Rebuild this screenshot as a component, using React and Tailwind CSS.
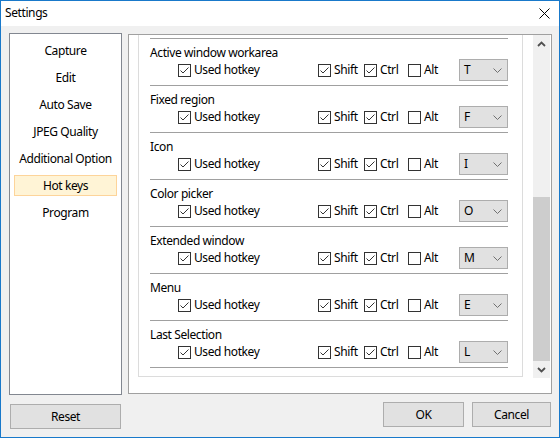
import React from "react";

const menu = ["Capture", "Edit", "Auto Save", "JPEG Quality", "Additional Option", "Hot keys", "Program"];

const hotkeys = [
  { name: "Active window workarea", key: "T" },
  { name: "Fixed region", key: "F" },
  { name: "Icon", key: "I" },
  { name: "Color picker", key: "O" },
  { name: "Extended window", key: "M" },
  { name: "Menu", key: "E" },
  { name: "Last Selection", key: "L" },
];

const Check = ({ checked, label }) => (
  <span className="flex items-center gap-[3px]">
    <span className="w-[13px] h-[13px] border border-[#333333] bg-white flex items-center justify-center shrink-0">
      {checked && (
        <svg width="11" height="11" viewBox="0 0 11 11">
          <path d="M1.5 5.5 L4 8 L9.5 2.5" stroke="#333333" strokeWidth="1" fill="none" />
        </svg>
      )}
    </span>
    <span>{label}</span>
  </span>
);

const Chevron = ({ up }) => (
  <svg width="9" height="6" viewBox="0 0 9 6">
    <path
      d={up ? "M1 5 L4.5 1.5 L8 5" : "M1 1 L4.5 4.5 L8 1"}
      stroke="#505050"
      strokeWidth="1.8"
      fill="none"
    />
  </svg>
);

const HotkeyGroup = ({ name, hotkey }) => (
  <div className="ml-[11px] w-[358px]">
    <div className="h-px bg-[#a0a0a0]" />
    <div className="pt-[7px] h-[20px] leading-[13px]">{name}</div>
    <div className="h-[22px] flex items-center pl-[28px]">
      <div className="w-[140px]">
        <Check checked label="Used hotkey" />
      </div>
      <div className="w-[46px]">
        <Check checked label="Shift" />
      </div>
      <div className="w-[44px]">
        <Check checked label="Ctrl" />
      </div>
      <div className="w-[51px]">
        <Check label="Alt" />
      </div>
      <div className="w-[49px] h-[22px] border border-[#adadad] bg-[#e1e1e1] flex items-center justify-between pl-[4px] pr-[5px]">
        <span>{hotkey}</span>
        <svg width="9" height="5" viewBox="0 0 9 5">
          <path d="M0.5 0.5 L4.5 4.5 L8.5 0.5" stroke="#707070" strokeWidth="1" fill="none" />
        </svg>
      </div>
    </div>
    <div className="h-[4px]" />
  </div>
);

export default function App() {
  return (
    <div className="w-[560px] h-[438px] border border-[#1979ca] flex flex-col bg-[#f0f0f0] text-[12px] tracking-[-0.4px] text-black font-['Noto_Sans',sans-serif] overflow-hidden">
      {/* Title bar */}
      <div className="h-[25px] bg-white flex items-center justify-between pl-[4px] pr-[9px] pb-px shrink-0">
        <span>Settings</span>
        <svg width="11" height="11" viewBox="0 0 11 11">
          <path d="M0.5 0.5 L10.5 10.5 M10.5 0.5 L0.5 10.5" stroke="#000" strokeWidth="1" />
        </svg>
      </div>

      <div className="flex">
        {/* Left column */}
        <div className="ml-[8px] mt-[7px] w-[113px] flex flex-col">
          <div className="h-[362px] border border-[#828790] bg-white pt-[3px]">
            {menu.map((item) => (
              <div key={item} className="h-[27px] flex items-center">
                <div
                  className={
                    item === "Hot keys"
                      ? "mx-[4px] w-full h-[21px] flex items-center justify-center bg-[#fff4d6] border border-[#fdd49a]"
                      : "w-full text-center"
                  }
                >
                  {item}
                </div>
              </div>
            ))}
          </div>
          <button className="mt-[9px] ml-px w-[111px] h-[25px] border border-[#adadad] bg-[#e1e1e1]">
            Reset
          </button>
        </div>

        {/* Right column */}
        <div className="ml-[6px] mt-[8px] w-[424px] flex flex-col">
          <div className="h-[360px] border border-[#a0a0a0] bg-white">
            <div className="h-[343px] flex">
              <div className="w-[403px] overflow-hidden">
                <div className="ml-[9px] w-[385px] border-x border-b border-[#dcdcdc] pt-[3px] pb-[8px]">
                  {hotkeys.map((h) => (
                    <HotkeyGroup key={h.name} name={h.name} hotkey={h.key} />
                  ))}
                  <div className="ml-[11px] w-[358px] h-px bg-[#a0a0a0]" />
                </div>
              </div>
              {/* Scrollbar */}
              <div className="ml-px w-[17px] bg-[#f0f0f0] flex flex-col">
                <div className="h-[17px] flex items-center justify-center">
                  <Chevron up />
                </div>
                <div className="flex-1 flex flex-col justify-end">
                  <div className="h-[164px] bg-[#cdcdcd]" />
                </div>
                <div className="h-[17px] flex items-center justify-center">
                  <Chevron />
                </div>
              </div>
            </div>
          </div>
          <div className="mt-[8px] flex gap-[8px] pl-[255px]">
            <button className="w-[81px] h-[25px] border border-[#adadad] bg-[#e1e1e1]">OK</button>
            <button className="w-[79px] h-[25px] border border-[#adadad] bg-[#e1e1e1]">Cancel</button>
          </div>
        </div>
      </div>
    </div>
  );
}
